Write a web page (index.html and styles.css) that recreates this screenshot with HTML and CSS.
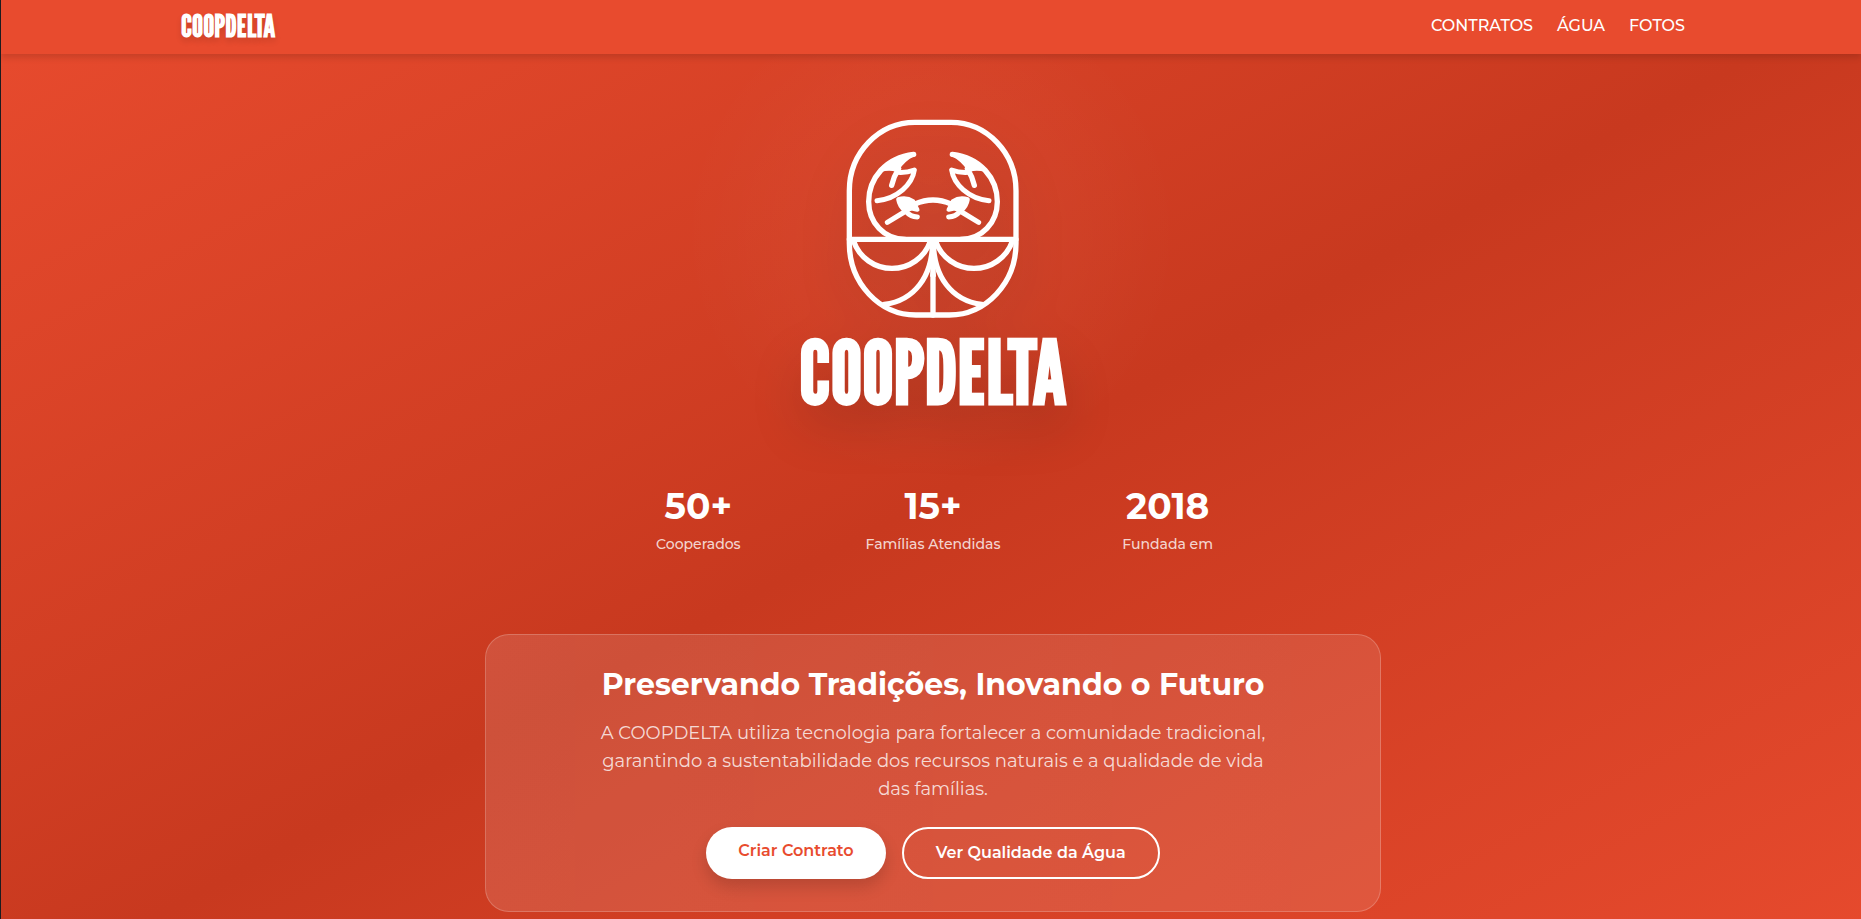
FILE: index.html
```html
<!DOCTYPE html>
<html lang="pt-BR">
<head>
  <meta charset="utf-8">
  <meta name="viewport" content="width=device-width, initial-scale=1">
  <title>COOPDELTA</title>
  <link rel="stylesheet" href="styles.css">
</head>
<body>
  <header class="header">
    <div class="header-inner">
      <a class="brand wordmark" href="#">COOPDELTA</a>
      <nav class="nav">
        <a href="#contratos">CONTRATOS</a>
        <a href="#agua">ÁGUA</a>
        <a href="#fotos">FOTOS</a>
      </nav>
    </div>
  </header>

  <main class="hero">
    <div class="logo">
      <svg class="emblem" viewBox="45 57 522 600" fill="none" stroke="#fff" stroke-width="16" stroke-linecap="round" stroke-linejoin="round" aria-hidden="true">
        <defs>
          <g id="half">
            <path d="M248 163C165 172 113 235 113 305C113 368 160 418 222 418"/>
            <path d="M247 163Q200 170 160 207Q178 203 197 209Q216 178 247 163Z" fill="#fff" stroke-width="13"/>
            <path d="M203 206Q188 230 182 256" stroke-width="16"/>
            <path d="M200 217Q226 219 250 210C244 252 200 296 138 302" stroke-width="15"/>
            <path d="M202 298Q226 290 246 304L259 329L242 325Q232 327 223 333Q205 318 202 298Z" fill="#fff" stroke-width="13"/>
            <path d="M225 334Q238 350 259 351M169 367L225 333" stroke-width="15"/>
            <path d="M68 424A122 122 0 0 0 298 424"/>
            <path d="M305 425C304 530 250 602 160 613"/>
          </g>
        </defs>
        <path d="M252 67H360A195 205 0 0 1 555 272V430A200 215 0 0 1 355 645H257A200 215 0 0 1 55 430V272A197 205 0 0 1 252 67Z"/>
        <path d="M55 418H555M306 420V645"/>
        <path d="M252 312Q306 288 360 312"/>
        <path d="M292 424H320L306 452ZM306 490L300 528H312Z" fill="#fff" stroke-width="6"/>
        <use href="#half"/>
        <use href="#half" transform="translate(612 0) scale(-1 1)"/>
      </svg>
      <h1 class="logo-text wordmark">COOPDELTA</h1>
    </div>

    <dl class="stats">
      <div class="stat"><dd>50+</dd><dt>Cooperados</dt></div>
      <div class="stat"><dd>15+</dd><dt>Famílias Atendidas</dt></div>
      <div class="stat"><dd>2018</dd><dt>Fundada em</dt></div>
    </dl>

    <section class="card">
      <h2>Preservando Tradições, Inovando o Futuro</h2>
      <p>A COOPDELTA utiliza tecnologia para fortalecer a comunidade tradicional, garantindo a sustentabilidade dos recursos naturais e a qualidade de vida das famílias.</p>
      <div class="actions">
        <a class="btn btn-solid" href="#contratos">Criar Contrato</a>
        <a class="btn btn-outline" href="#agua">Ver Qualidade da Água</a>
      </div>
    </section>
  </main>
</body>
</html>
```
FILE: styles.css
```css
*,
*::before,
*::after {
  box-sizing: border-box;
}

body,
h1,
h2,
p,
dl,
dd {
  margin: 0;
}

body {
  display: flex;
  flex-direction: column;
  min-height: 100vh;
  border-left: 1px solid #1c1c1f;
  background: linear-gradient(to bottom right, #e84b2e, #c8391f 50%, #e84b2e) 0 0 / 100% 1000px;
  color: #fff;
  font-family: Montserrat, Inter, "Open Sans", sans-serif;
  font-size: 16px;
  line-height: 24px;
}

a {
  color: inherit;
  text-decoration: none;
}

.wordmark {
  font-family: "League Gothic", "Bebas Neue", Anton, Oswald, "Roboto Condensed", sans-serif;
  font-weight: 700;
}

.header {
  position: relative;
  padding-left: 4px;
  background: #e84b2e;
  box-shadow: 0 4px 6px rgba(0, 0, 0, 0.12);
}

.header-inner {
  display: flex;
  align-items: center;
  justify-content: space-between;
  max-width: 1536px;
  margin: 0 auto;
  padding: 14px 16px 16px;
}

.brand {
  font-size: 31px;
  text-shadow: 0 4px 6px rgba(0, 0, 0, 0.12);
}

.nav {
  display: flex;
  gap: 24px;
  font-weight: 500;
}

.hero {
  display: flex;
  flex-direction: column;
  align-items: center;
  padding: 65px 16px 7px 20px;
  background: radial-gradient(circle 250px at 50% 180px, rgba(255, 255, 255, 0.05), rgba(255, 255, 255, 0));
}

.logo {
  display: flex;
  flex-direction: column;
  align-items: center;
  gap: 19px;
  filter: drop-shadow(0 24px 24px rgba(0, 0, 0, 0.15));
}

.emblem {
  width: 174px;
  height: 200px;
}

.logo-text {
  font-size: 88px;
  line-height: 68px;
}

.stats {
  display: grid;
  grid-template-columns: repeat(3, 1fr);
  gap: 32px;
  width: 100%;
  max-width: 672px;
  margin-top: 80px;
  text-align: center;
}

.stat {
  display: flex;
  flex-direction: column;
  gap: 8px;
}

.stat dd {
  font-size: 36px;
  font-weight: 700;
  line-height: 40px;
}

.stat dt {
  color: rgba(255, 255, 255, 0.8);
  font-size: 14px;
  font-weight: 500;
  line-height: 20px;
}

.card {
  width: 100%;
  max-width: 896px;
  margin-top: 80px;
  padding: 32px 96px;
  border: 1px solid rgba(255, 255, 255, 0.2);
  border-radius: 24px;
  background: linear-gradient(to right, rgba(255, 255, 255, 0.12), rgba(255, 255, 255, 0.1));
  text-align: center;
}

.card h2 {
  font-size: 30px;
  font-weight: 700;
  line-height: 36px;
}

.card p {
  max-width: 672px;
  margin: 16px auto 24px;
  color: rgba(255, 255, 255, 0.8);
  font-size: 18px;
  line-height: 28px;
}

.actions {
  display: flex;
  flex-wrap: wrap;
  justify-content: center;
  gap: 16px;
}

.btn {
  padding: 12px 32px;
  border-radius: 26px;
  font-weight: 600;
}

.btn-solid {
  background: #fff;
  box-shadow: 0 8px 16px rgba(0, 0, 0, 0.15);
  color: #e84b2e;
}

.btn-outline {
  border: 2px solid #fff;
}
```
